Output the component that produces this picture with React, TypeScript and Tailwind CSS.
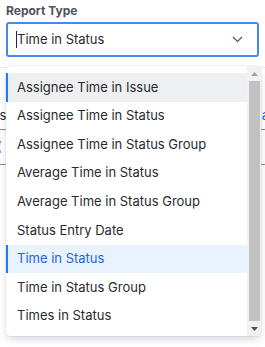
import React from "react";

const items = [
  "Assignee Time in Issue",
  "Assignee Time in Status",
  "Assignee Time in Status Group",
  "Average Time in Status",
  "Average Time in Status Group",
  "Status Entry Date",
  "Time in Status",
  "Time in Status Group",
  "Times in Status",
];

export default function App() {
  return (
    <div
      className="relative w-[265px] h-[347px] bg-white overflow-hidden"
      style={{ fontFamily: "Inter, 'Noto Sans', sans-serif" }}
    >
      <div className="px-[6px] pt-[3px]">
        <div className="text-[12px] font-bold leading-[16px] text-[#505258]">Report Type</div>
        <div className="mt-[3px] h-[35px] rounded-[3px] border-2 border-[#4688ec] flex items-center pl-[8px] pr-[12px]">
          <span className="w-[1px] h-[17px] bg-[#172b4d]" />
          <span className="flex-1 text-[13px] text-[#292a2e]">Time in Status</span>
          <svg width="11" height="7" viewBox="0 0 11 7" fill="none" className="mr-[2px]">
            <path d="M1 1l4.5 4.5L10 1" stroke="#44546f" strokeWidth="1.2" />
          </svg>
        </div>
        {/* background content */}
        <div className="mt-[10px] border-t border-[#ebecf0] -mx-[6px]">
          <div className="h-[62px] flex items-end pb-[4px] text-[13px] text-[#292a2e] border-b border-[#8590a2]">
            <span className="-ml-[4px]">Issue</span>
            <span className="ml-auto -mr-[4px] text-[#0c66e4]">a</span>
          </div>
          <div className="h-[35px] flex items-center text-[13px] text-[#626f86] border-b border-[#8590a2]">
            <span className="-ml-[3px]">(</span>
          </div>
        </div>
      </div>

      <div className="absolute left-[6px] top-[66px] w-[255px] h-[270px] bg-white rounded-[4px] shadow-[0_4px_10px_-2px_rgba(9,30,66,0.22),0_0_1px_rgba(9,30,66,0.31)] flex overflow-hidden">
        <div className="flex-1 pt-[7px]">
          {items.map((it, i) => {
            const hover = i === 0;
            const sel = i === 6;
            return (
              <div
                key={it}
                className={`h-[28.6px] flex items-center pl-[9px] text-[13px] border-l-2 ${
                  hover
                    ? "bg-[#eeeff1] border-[#1d7afc] text-[#292a2e]"
                    : sel
                    ? "bg-[#e9f2ff] border-[#1d7afc] text-[#1868db]"
                    : "border-transparent text-[#292a2e]"
                }`}
              >
                {it}
              </div>
            );
          })}
        </div>
        <div className="w-[14px] bg-[#f1f1f1] flex flex-col items-center">
          <div className="h-[15px] flex items-center justify-center">
            <svg width="7" height="4" viewBox="0 0 7 4">
              <path d="M0 4L3.5 0L7 4Z" fill="#a3a3a3" />
            </svg>
          </div>
          <div className="w-[11px] flex-1 bg-[#c1c1c1]" />
          <div className="h-[15px] flex items-center justify-center">
            <svg width="7" height="4" viewBox="0 0 7 4">
              <path d="M0 0L3.5 4L7 0Z" fill="#505050" />
            </svg>
          </div>
        </div>
      </div>
    </div>
  );
}
